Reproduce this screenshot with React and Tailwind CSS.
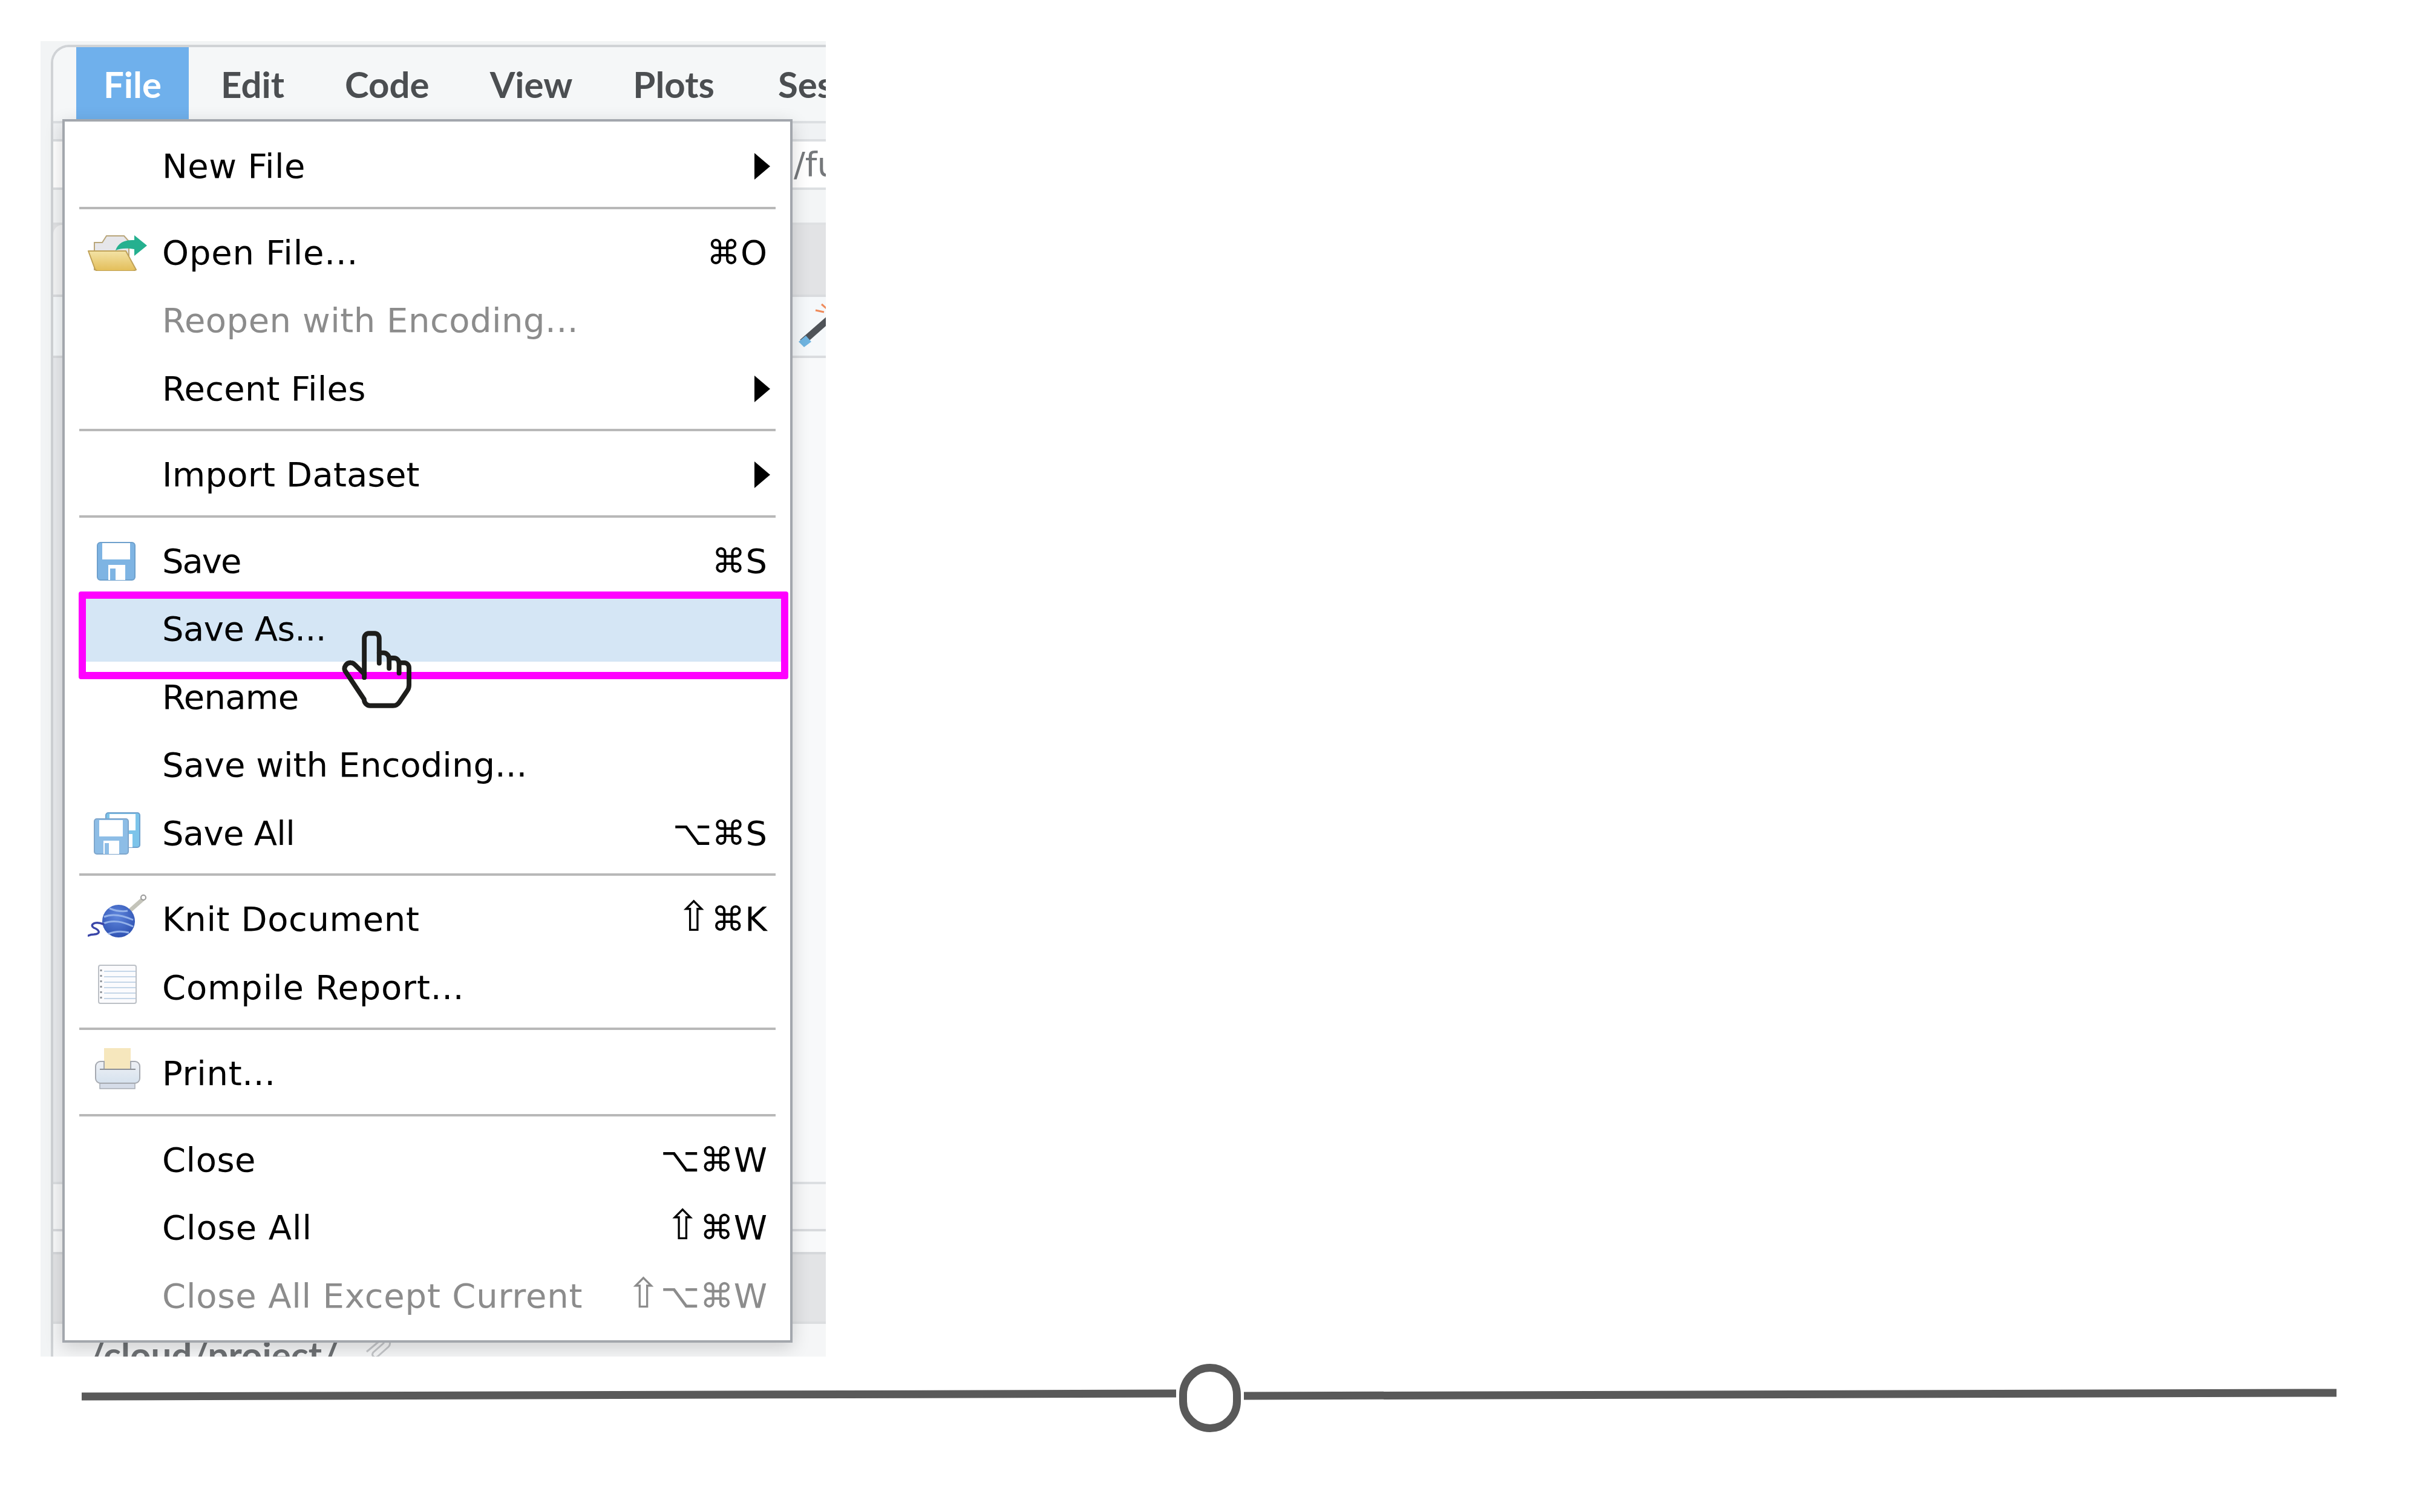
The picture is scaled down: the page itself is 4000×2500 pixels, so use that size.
const menuFont = "font-['DejaVu_Sans',sans-serif]";

function FolderIcon({ className }) {
  return (
    <svg viewBox="0 0 98 60" className={className}>
      <defs>
        <linearGradient id="folderFront" x1="0" y1="0" x2="0" y2="1">
          <stop offset="0" stopColor="#f3e3a6" />
          <stop offset="1" stopColor="#e3bd58" />
        </linearGradient>
      </defs>
      <path d="M11 26V13h13l7-11h29l8 9v47H11z" fill="#e6e6ea" stroke="#b9a67a" strokeWidth="2" />
      <path d="M1 27h62l17 31c-2 1-4 2-6 2H17c-3 0-4-1-5-3z" fill="url(#folderFront)" stroke="#c0a258" strokeWidth="2" strokeLinejoin="round" />
      <path d="M46 26c4-13 16-18 31-17V1l21 17-21 17V24c-12-2-22-2-31 2z" fill="#25b08f" />
    </svg>
  );
}

function SaveIcon({ className, tint = '#7eb4e3' }) {
  return (
    <svg viewBox="0 0 64 64" className={className}>
      <rect x="1" y="1" width="62" height="62" rx="5" fill={tint} stroke="#6ea0cc" strokeWidth="2" />
      <rect x="9" y="2" width="46" height="27" fill="#fff" />
      <rect x="19" y="38" width="28" height="25" fill="#fff" />
      <rect x="22" y="44" width="9" height="19" fill={tint} />
    </svg>
  );
}

function SaveAllIcon({ className }) {
  return (
    <svg viewBox="0 0 77 70" className={className}>
      <rect x="20" y="1" width="56" height="57" rx="4" fill="#7cc4ea" stroke="#6ea0cc" strokeWidth="2" />
      <rect x="26" y="3" width="43" height="27" fill="#fff" />
      <rect x="50" y="36" width="14" height="22" fill="#fff" />
      <rect x="1" y="11" width="56" height="58" rx="4" fill="#8dbde6" stroke="#7ea6cc" strokeWidth="2" />
      <rect x="9" y="13" width="39" height="27" fill="#fff" />
      <rect x="16" y="47" width="26" height="22" fill="#fff" />
      <rect x="18" y="51" width="7" height="18" fill="#8dbde6" />
    </svg>
  );
}

function KnitIcon({ className }) {
  return (
    <svg viewBox="0 0 97 72" className={className}>
      <defs>
        <radialGradient id="yarn" cx="0.45" cy="0.35" r="0.7">
          <stop offset="0" stopColor="#5f86dc" />
          <stop offset="1" stopColor="#2c4fb0" />
        </radialGradient>
      </defs>
      <path d="M93 7 58 38" stroke="#c4c4ba" strokeWidth="7" strokeLinecap="round" />
      <circle cx="92" cy="6" r="4" fill="#fff" stroke="#999" strokeWidth="2" />
      <circle cx="51" cy="45" r="27" fill="url(#yarn)" />
      <path d="M27 38c14-6 30-3 48 5M26 49c16-7 32-3 49 5M34 66c10-4 22-5 34-2M36 24c10 4 20 6 30 4" stroke="#94b2ea" strokeWidth="3" fill="none" />
      <path d="M26 50C10 44 3 52 10 56c10 4 12 10 0 11-4 0-7 1-9 2" stroke="#3a46a8" strokeWidth="3.5" fill="none" strokeLinecap="round" />
    </svg>
  );
}

function ReportIcon({ className }) {
  return (
    <svg viewBox="0 0 64 65" className={className}>
      <rect x="1" y="1" width="62" height="63" rx="3" fill="#fbfbfd" stroke="#bcc0c6" strokeWidth="2" />
      <path d="M10 11h52M10 20h52M10 29h52M10 38h52M10 47h52M10 56h52" stroke="#c5d6e8" strokeWidth="2" />
      <path d="M5 8v50" stroke="#8a8f96" strokeWidth="3" strokeDasharray="3 6" />
    </svg>
  );
}

function PrintIcon({ className }) {
  return (
    <svg viewBox="0 0 75 68" className={className}>
      <defs>
        <linearGradient id="printerBody" x1="0" y1="0" x2="0" y2="1">
          <stop offset="0" stopColor="#eef0f5" />
          <stop offset="1" stopColor="#d6e2ee" />
        </linearGradient>
      </defs>
      <rect x="15" y="0" width="44" height="36" fill="#f6e7bd" />
      <rect x="8" y="56" width="58" height="11" fill="#d5dce8" stroke="#a8adb5" strokeWidth="1.5" />
      <path d="M15 22H9a8 8 0 0 0-8 8v20a8 8 0 0 0 8 8h57a8 8 0 0 0 8-8V30a8 8 0 0 0-8-8h-7v13H15z" fill="url(#printerBody)" stroke="#a5a9b0" strokeWidth="2" />
      <path d="M8 35h59" stroke="#8b8f96" strokeWidth="2" />
    </svg>
  );
}

function HandCursor({ className }) {
  return (
    <svg viewBox="130 125 350 400" className={className} fill="none" stroke="#1d1d1b" strokeWidth="24" strokeLinecap="round" strokeLinejoin="round">
      <path d="M243 362V165c0-14 10-25 22-25h30c14 0 23 11 23 25v125" />
      <path d="M318 238h22c16 0 28 14 28 30v48" />
      <path d="M368 264h24c15 0 26 12 26 28v48" />
      <path d="M418 288h26c14 0 24 12 24 26v86c0 12-4 22-10 30l-38 56c-8 12-18 18-32 18H272c-16 0-30-14-30-32L146 328c-8-16 6-42 30-40 10 0 16 5 22 12l45 45" />
    </svg>
  );
}

function WandIcon({ className }) {
  return (
    <svg viewBox="0 0 70 78" className={className}>
      <path d="M6 69 64 18" stroke="#4f5358" strokeWidth="11" />
      <path d="M0 68 12 58l9 10-12 9z" fill="#6fb4e0" />
      <path d="M38 6l8 7M28 16l14 3M48 0l3 8" stroke="#ef8a5a" strokeWidth="3" />
    </svg>
  );
}

function SubmenuArrow() {
  return (
    <svg viewBox="0 0 26 44" className="mr-[-5px] h-[44px] w-[26px]">
      <path d="M0 0 26 22 0 44z" fill="#000" />
    </svg>
  );
}

const menuGroups = [
  [{ label: 'New File', submenu: true, tracking: 'tracking-[0.4px]' }],
  [
    { label: 'Open File...', shortcut: '⌘O', tracking: 'tracking-[0.8px]', icon: <FolderIcon className="ml-[38px] h-[60px] w-[98px]" /> },
    { label: 'Reopen with Encoding...', disabled: true, tracking: 'tracking-[0.5px]' },
    { label: 'Recent Files', submenu: true, tracking: 'tracking-[0.2px]' },
  ],
  [{ label: 'Import Dataset', submenu: true, tracking: 'tracking-[0.2px]' }],
  [
    { label: 'Save', shortcut: '⌘S', tracking: 'tracking-[-2px]', icon: <SaveIcon className="ml-[53px] h-[64px] w-[64px]" /> },
    { label: 'Save As...', highlighted: true, tracking: 'tracking-[-0.5px]' },
    { label: 'Rename', tracking: 'tracking-[-0.7px]' },
    { label: 'Save with Encoding...' },
    { label: 'Save All', shortcut: '⌥⌘S', tracking: 'tracking-[-0.7px]', icon: <SaveAllIcon className="ml-[48px] h-[70px] w-[77px]" /> },
  ],
  [
    { label: 'Knit Document', shortcut: '⌘K', shift: true, tracking: 'tracking-[0.6px]', icon: <KnitIcon className="ml-[38px] h-[72px] w-[97px] -translate-y-[6px]" /> },
    { label: 'Compile Report...', tracking: 'tracking-[0.8px]', icon: <ReportIcon className="ml-[55px] h-[65px] w-[64px] -translate-y-[5px]" /> },
  ],
  [{ label: 'Print...', tracking: 'tracking-[0.7px]', icon: <PrintIcon className="ml-[50px] h-[68px] w-[75px] -translate-y-[8px]" /> }],
  [
    { label: 'Close', shortcut: '⌥⌘W', tracking: 'tracking-[0.5px]' },
    { label: 'Close All', shortcut: '⌘W', shift: true, tracking: 'tracking-[0.9px]' },
    { label: 'Close All Except Current', shortcut: '⌥⌘W', shift: true, disabled: true, tracking: 'tracking-[0.8px]' },
  ],
];

function MenuRow({ item }) {
  return (
    <div className={`relative flex h-[112.5px] items-center pr-[38px] text-[56px] ${item.disabled ? 'text-[#8c8c8c]' : 'text-black'}`}>
      {item.highlighted && (
        <>
          <div className="absolute left-[23px] top-[-6px] h-[145px] w-[1173px] rounded-[4px] border-[12px] border-[#ff00ff] bg-white">
            <div className="h-[104px] bg-[#d5e6f5]" />
          </div>
          <HandCursor className="absolute left-[458px] top-[58px] z-20 h-[132px] w-[115px]" />
        </>
      )}
      <div className="relative flex w-[161px] shrink-0 items-center">{item.icon}</div>
      <span className={`relative whitespace-nowrap ${item.tracking || ''}`}>{item.label}</span>
      {item.shortcut && (
        <span className="relative ml-auto whitespace-nowrap">
          {/* the shift arrow in the screenshot is larger than the other glyphs */}
          {item.shift && <span className="text-[68px] leading-none">⇧</span>}
          {item.shortcut}
        </span>
      )}
      {item.submenu && <span className="relative ml-auto"><SubmenuArrow /></span>}
    </div>
  );
}

function FileMenu() {
  return (
    <div className={`absolute left-[36px] top-[129px] h-[2023px] w-[1207px] border-4 border-[#a3a7ad] bg-white pt-[18px] shadow-[0_8px_28px_rgba(0,0,0,0.16)] ${menuFont}`}>
      {menuGroups.map((group, i) => (
        <div key={i}>
          {i > 0 && (
            <div className="h-[30px] pl-[24px] pt-[10px]">
              <div className="h-[4px] w-[1151px] bg-[#b8b8b8]" />
            </div>
          )}
          {group.map((item) => (
            <MenuRow key={item.label} item={item} />
          ))}
        </div>
      ))}
    </div>
  );
}

function AppBackground() {
  return (
    <div className="ml-[17px] mt-[6px] flex h-[2169px] w-[1400px] flex-col overflow-hidden rounded-tl-[30px] border-l-4 border-t-4 border-[#d0d3d6] bg-[#f8f9fa]">
      <div className="flex h-[122px] shrink-0 items-center bg-[#f5f7f8] font-['Lato',sans-serif] text-[60px] font-bold text-[#4b4e51]">
        <div className="ml-[38px] flex h-full w-[186px] shrink-0 items-center justify-center bg-[#6fb0ec] text-white">File</div>
        <div className="ml-[53px] flex shrink-0 gap-[100px]">
          <span>Edit</span>
          <span>Code</span>
          <span>View</span>
          <span>Plots</span>
          <span className="ml-[5px]">Session</span>
        </div>
      </div>
      <div className="h-[30px] shrink-0 border-t-4 border-[#dcdfe2] bg-[#f0f2f4]" />
      <div className="flex h-[84px] shrink-0 items-center border-y-4 border-[#dcdfe2] bg-white pl-[1224px] font-['DejaVu_Sans',sans-serif] text-[56px] text-[#75787b]">/fu</div>
      <div className="h-[58px] shrink-0 border-b-4 border-[#dfe1e3] bg-[#f3f5f6]" />
      <div className="flex h-[115px] shrink-0 bg-[#e2e3e5]">
        <div className="w-[15px] rounded-tl-[24px] bg-[#f3f4f5]" />
      </div>
      <div className="flex h-[105px] shrink-0 items-start border-y-4 border-[#dadcdf] bg-[#f5f8fa] pl-[1232px] pt-[6px]">
        <WandIcon className="h-[78px] w-[70px] shrink-0" />
      </div>
      <div className="flex h-[1362px] shrink-0 bg-[#f8f9fa]">
        <div className="w-[15px] bg-[#e9ebee]" />
      </div>
      <div className="h-[78px] shrink-0 border-t-4 border-[#dcdfe2] bg-[#f6f7f8]" />
      <div className="h-[38px] shrink-0 border-t-4 border-[#d8dadd] bg-[#f8f9fa]" />
      <div className="h-[115px] shrink-0 border-t-4 border-[#d6d8db] bg-[#e3e4e6]" />
      <div className="flex h-[62px] shrink-0 items-start gap-[40px] border-t-4 border-[#dcdee0] bg-[#f5f6f7] pl-[58px] pt-[20px] font-['Lato',sans-serif] text-[60px] font-bold leading-[60px] text-[#6d7073]">
        <span>/cloud/project/</span>
        <svg viewBox="0 0 56 40" className="h-[40px] w-[56px] shrink-0" fill="none" stroke="#c4c6c9" strokeWidth="3">
          <path d="M6 26 30 6c8-6 20 4 12 12L24 34c-5 4-11-2-7-7l18-16" />
        </svg>
      </div>
    </div>
  );
}

export default function App() {
  return (
    <div className="h-[2500px] w-[4000px] overflow-hidden bg-white pt-[68px]">
      <div className="relative ml-[67px] h-[2175px] w-[1298px] overflow-hidden bg-[#f2f4f5]">
        <AppBackground />
        <FileMenu />
      </div>
      {/* timeline marker under the screenshot */}
      <div className="mt-[12px] flex items-center pl-[135px]">
        <div className="h-[13px] w-[1809px] -translate-y-[5px] -rotate-[0.16deg] bg-[#595959]" />
        <div className="ml-[5px] h-[113px] w-[102px] shrink-0 rounded-full border-[13px] border-[#595959]" />
        <div className="ml-[5px] h-[13px] w-[1806px] -translate-y-[6px] -rotate-[0.16deg] bg-[#595959]" />
      </div>
    </div>
  );
}
